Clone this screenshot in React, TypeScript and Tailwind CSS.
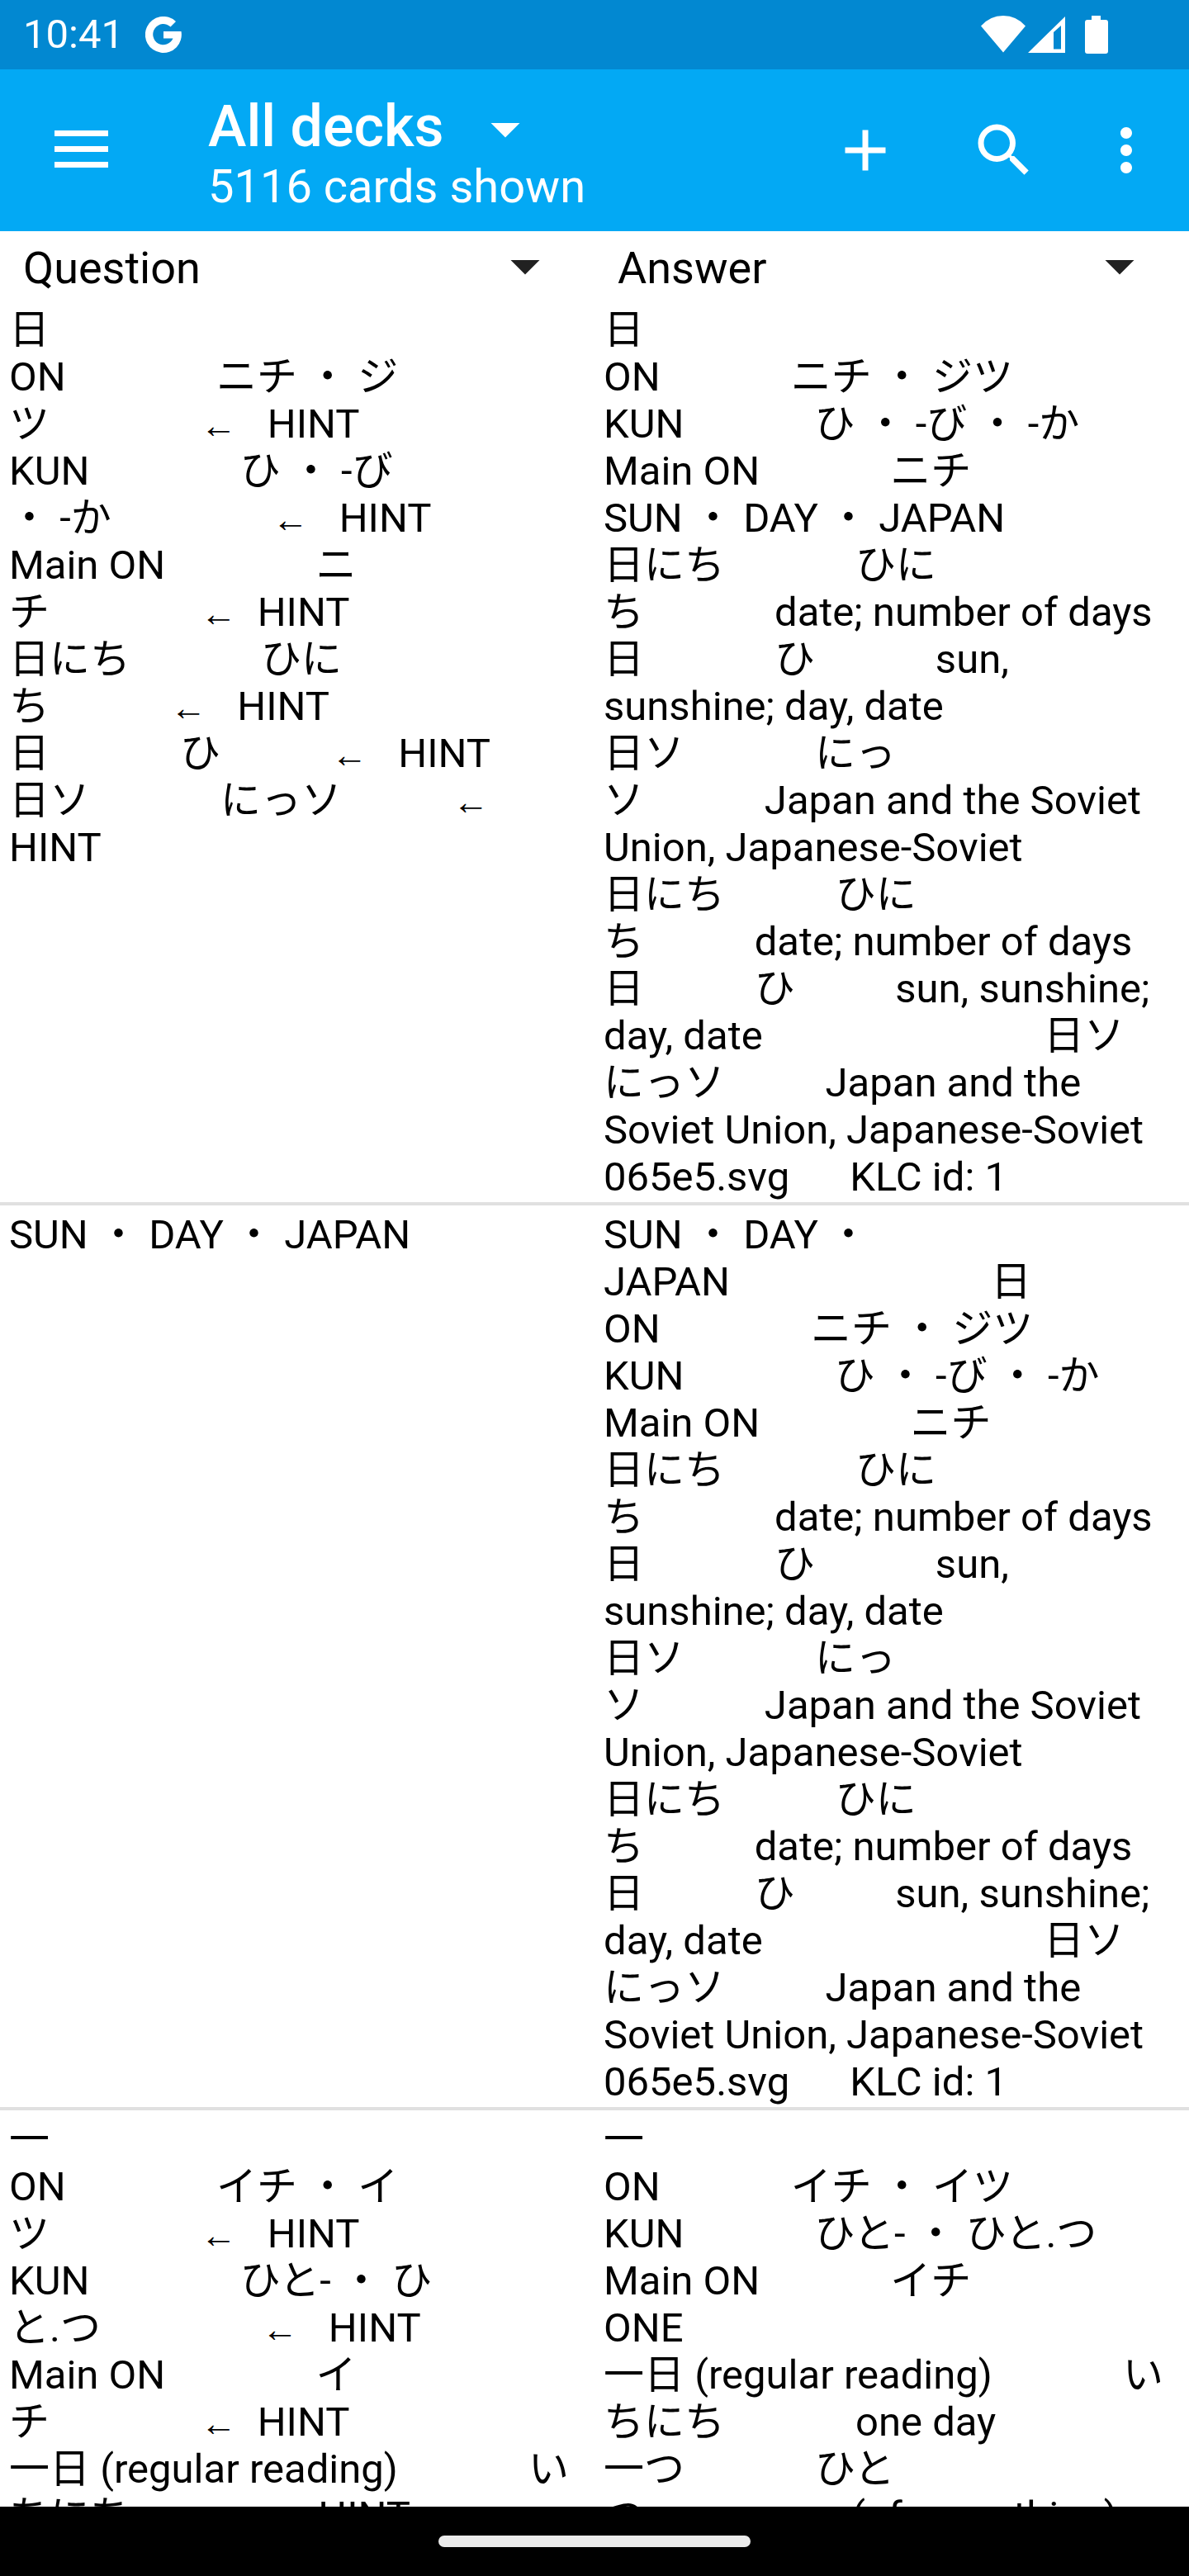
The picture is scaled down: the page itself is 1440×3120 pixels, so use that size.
import React from "react";

const sp = (n: number) => " ".repeat(n);

function Arrow() {
  return <span className="inline-block w-[45px] text-center align-baseline font-['Liberation_Serif'] text-[44px] leading-none">←</span>;
}

function CardText({ lines }: { lines: string[] }) {
  return (
    <>
      {lines.map((line, i) => {
        const parts = line.split("←");
        return (
          <div key={i} className="h-[57px] whitespace-pre leading-[57px]">
            {parts.map((part, j) => (
              <React.Fragment key={j}>
                {j > 0 && <Arrow />}
                {part}
              </React.Fragment>
            ))}
          </div>
        );
      })}
    </>
  );
}

const meanings = [
  `日にち${sp(13)}ひに`,
  `ち${sp(13)}date; number of days`,
  `日${sp(13)}ひ${sp(12)}sun,`,
  "sunshine; day, date",
  `日ソ${sp(13)}にっ`,
  `ソ${sp(12)}Japan and the Soviet`,
  "Union, Japanese-Soviet",
  `日にち${sp(11)}ひに`,
  `ち${sp(11)}date; number of days`,
  `日${sp(11)}ひ${sp(10)}sun, sunshine;`,
  `day, date${sp(28)}日ソ`,
  `にっソ${sp(10)}Japan and the`,
  "Soviet Union, Japanese-Soviet",
  `065e5.svg${sp(6)}KLC id: 1`,
];

const cards = [
  {
    question: [
      "日",
      `ON${sp(15)}ニチ ・ ジ`,
      `ツ${sp(15)}←${sp(3)}HINT`,
      `KUN${sp(15)}ひ ・ -び`,
      `・ -か${sp(16)}←${sp(3)}HINT`,
      `Main ON${sp(15)}ニ`,
      `チ${sp(15)}←${sp(2)}HINT`,
      `日にち${sp(13)}ひに`,
      `ち${sp(12)}←${sp(3)}HINT`,
      `日${sp(13)}ひ${sp(11)}←${sp(3)}HINT`,
      `日ソ${sp(13)}にっソ${sp(11)}←`,
      "HINT",
    ],
    answer: [
      "日",
      `ON${sp(13)}ニチ ・ ジツ`,
      `KUN${sp(13)}ひ ・ -び ・ -か`,
      `Main ON${sp(13)}ニチ`,
      "SUN ・ DAY ・ JAPAN",
      ...meanings,
    ],
  },
  {
    question: ["SUN ・ DAY ・ JAPAN"],
    answer: [
      "SUN ・ DAY ・",
      `JAPAN${sp(26)}日`,
      `ON${sp(15)}ニチ ・ ジツ`,
      `KUN${sp(15)}ひ ・ -び ・ -か`,
      `Main ON${sp(15)}ニチ`,
      ...meanings,
    ],
  },
  {
    question: [
      "一",
      `ON${sp(15)}イチ ・ イ`,
      `ツ${sp(15)}←${sp(3)}HINT`,
      `KUN${sp(15)}ひと- ・ ひ`,
      `と.つ${sp(16)}←${sp(3)}HINT`,
      `Main ON${sp(15)}イ`,
      `チ${sp(15)}←${sp(2)}HINT`,
      `一日 (regular reading)${sp(13)}い`,
      `ちにち${sp(12)}←${sp(3)}HINT`,
    ],
    answer: [
      "一",
      `ON${sp(13)}イチ ・ イツ`,
      `KUN${sp(13)}ひと- ・ ひと.つ`,
      `Main ON${sp(13)}イチ`,
      "ONE",
      `一日 (regular reading)${sp(13)}い`,
      `ちにち${sp(13)}one day`,
      `一つ${sp(13)}ひと`,
      `つ${sp(13)}one (of something)`,
    ],
  },
];

function DropDown({ className }: { className: string }) {
  return (
    <svg viewBox="0 0 24 24" className={className} fill="currentColor" aria-hidden="true">
      <path d="M7 10l5 5 5-5z" />
    </svg>
  );
}

function ColumnSelect({ label }: { label: string }) {
  return (
    <div className="relative h-21 w-1/2">
      <select
        aria-label={`${label} column`}
        defaultValue={label}
        className="h-full w-full appearance-none bg-transparent pt-1.5 pl-7 text-[54px] leading-[78px] text-black outline-none"
      >
        <option>{label}</option>
      </select>
      <DropDown className="pointer-events-none absolute top-0 right-[42px] size-21 text-[#212121]" />
    </div>
  );
}

export default function App() {
  return (
    <div
      lang="ja"
      className="flex h-screen flex-col overflow-hidden bg-white font-[Roboto,'Noto_Sans_CJK_JP',sans-serif] text-black"
    >
      <div className="flex h-21 shrink-0 items-center bg-[#0288d1] pr-[98px] pl-7 text-white">
        <span className="text-[49px] leading-[84px]">10:41</span>
        <svg viewBox="0 0 44 44" className="ml-[26px] size-11" fill="#fff" aria-label="Google">
          <path d="M37 6L30.500 12.500A12.600 12.600 0 1 0 33.500 26.500H22V18H43.500A22 22 0 1 1 37 6z" />
        </svg>
        <div className="ml-auto flex items-center">
          <svg viewBox="0 0 54 46" className="h-[46px] w-[54px]" fill="#fff" aria-label="Wi-Fi">
            <path d="M0 12.500Q11 0 27 0T54 12.500L27 44.500z" />
          </svg>
          <svg viewBox="0 0 46 46" className="ml-0.5 h-[46px] w-[46px]" fill="#fff" aria-label="Signal">
            <path fillRule="evenodd" d="M1 45L46 1V45zM32 20V40.500H41V12z" />
          </svg>
          <svg viewBox="0 0 28 46" className="ml-6 h-[46px] w-7" fill="#fff" aria-label="Battery">
            <path d="M8 0H19V5H25Q28 5 28 8V43Q28 46 25 46H3Q0 46 0 43V8Q0 5 3 5H8z" />
          </svg>
        </div>
      </div>

      <header className="flex h-49 shrink-0 items-center bg-[#03a9f4] pr-[34px] pl-14 text-white">
        <button type="button" aria-label="Open menu" className="flex size-21 items-center justify-center pb-[3px]">
          <svg viewBox="0 0 65 45" className="h-[45px] w-[65px]" fill="currentColor">
            <path d="M0 0h65v7H0zM0 19h65v7H0zM0 38h65v7H0z" />
          </svg>
        </button>
        <button type="button" className="ml-28 flex flex-col items-start pt-2 text-left">
          <span className="flex h-20 items-center">
            <span className="pb-1.5 text-[70px] leading-[76px] font-medium">All decks</span>
            <DropDown className="ml-8 size-21 shrink-0" />
          </span>
          <span className="text-[56px] leading-[60px]">5116 cards shown</span>
        </button>
        <div className="ml-auto flex items-center">
          <button type="button" aria-label="Add card" className="size-21">
            <svg viewBox="0 0 24 24" className="size-21" fill="currentColor">
              <path d="M19 13h-6v6h-2v-6H5v-2h6V5h2v6h6v2z" />
            </svg>
          </button>
          <button type="button" aria-label="Search" className="ml-[84px] size-21">
            <svg viewBox="0 0 24 24" className="size-21" fill="currentColor">
              <path d="M15.500 14h-.79l-.28-.27A6.471 6.471 0 0 0 16 9.500 6.500 6.500 0 1 0 9.500 16c1.610 0 3.090-.59 4.230-1.570l.27.28v.79l5 4.990L20.490 19l-4.990-5zm-6 0C7.010 14 5 11.990 5 9.500S7.010 5 9.500 5 14 7.010 14 9.500 11.990 14 9.500 14z" />
            </svg>
          </button>
          <button type="button" aria-label="More options" className="ml-16 size-21">
            <svg viewBox="0 0 24 24" className="size-21" fill="currentColor">
              <path d="M12 8c1.100 0 2-.9 2-2s-.9-2-2-2-2 .9-2 2 .9 2 2 2zm0 2c-1.100 0-2 .9-2 2s.9 2 2 2 2-.9 2-2-.9-2-2-2zm0 6c-1.100 0-2 .9-2 2s.9 2 2 2 2-.9 2-2-.9-2-2-2z" />
            </svg>
          </button>
        </div>
      </header>

      <div className="flex shrink-0">
        <ColumnSelect label="Question" />
        <ColumnSelect label="Answer" />
      </div>

      <main className="min-h-0 flex-1 overflow-hidden">
        <table className="w-full table-fixed border-collapse text-[49px]">
          <tbody>
            {cards.map((card, i) => (
              <tr key={i} className="border-b-4 border-[#e0e0e0] align-top">
                <td className="overflow-hidden pt-[7px] pb-0.5 pl-[11px]">
                  <CardText lines={card.question} />
                </td>
                <td className="overflow-hidden pt-[7px] pb-0.5 pl-[11px]">
                  <CardText lines={card.answer} />
                </td>
              </tr>
            ))}
          </tbody>
        </table>
      </main>

      <nav className="flex h-21 shrink-0 items-center justify-center bg-black">
        <button type="button" aria-label="Home" className="h-3.5 w-[378px] rounded-full bg-[#ebebeb]" />
      </nav>
    </div>
  );
}
